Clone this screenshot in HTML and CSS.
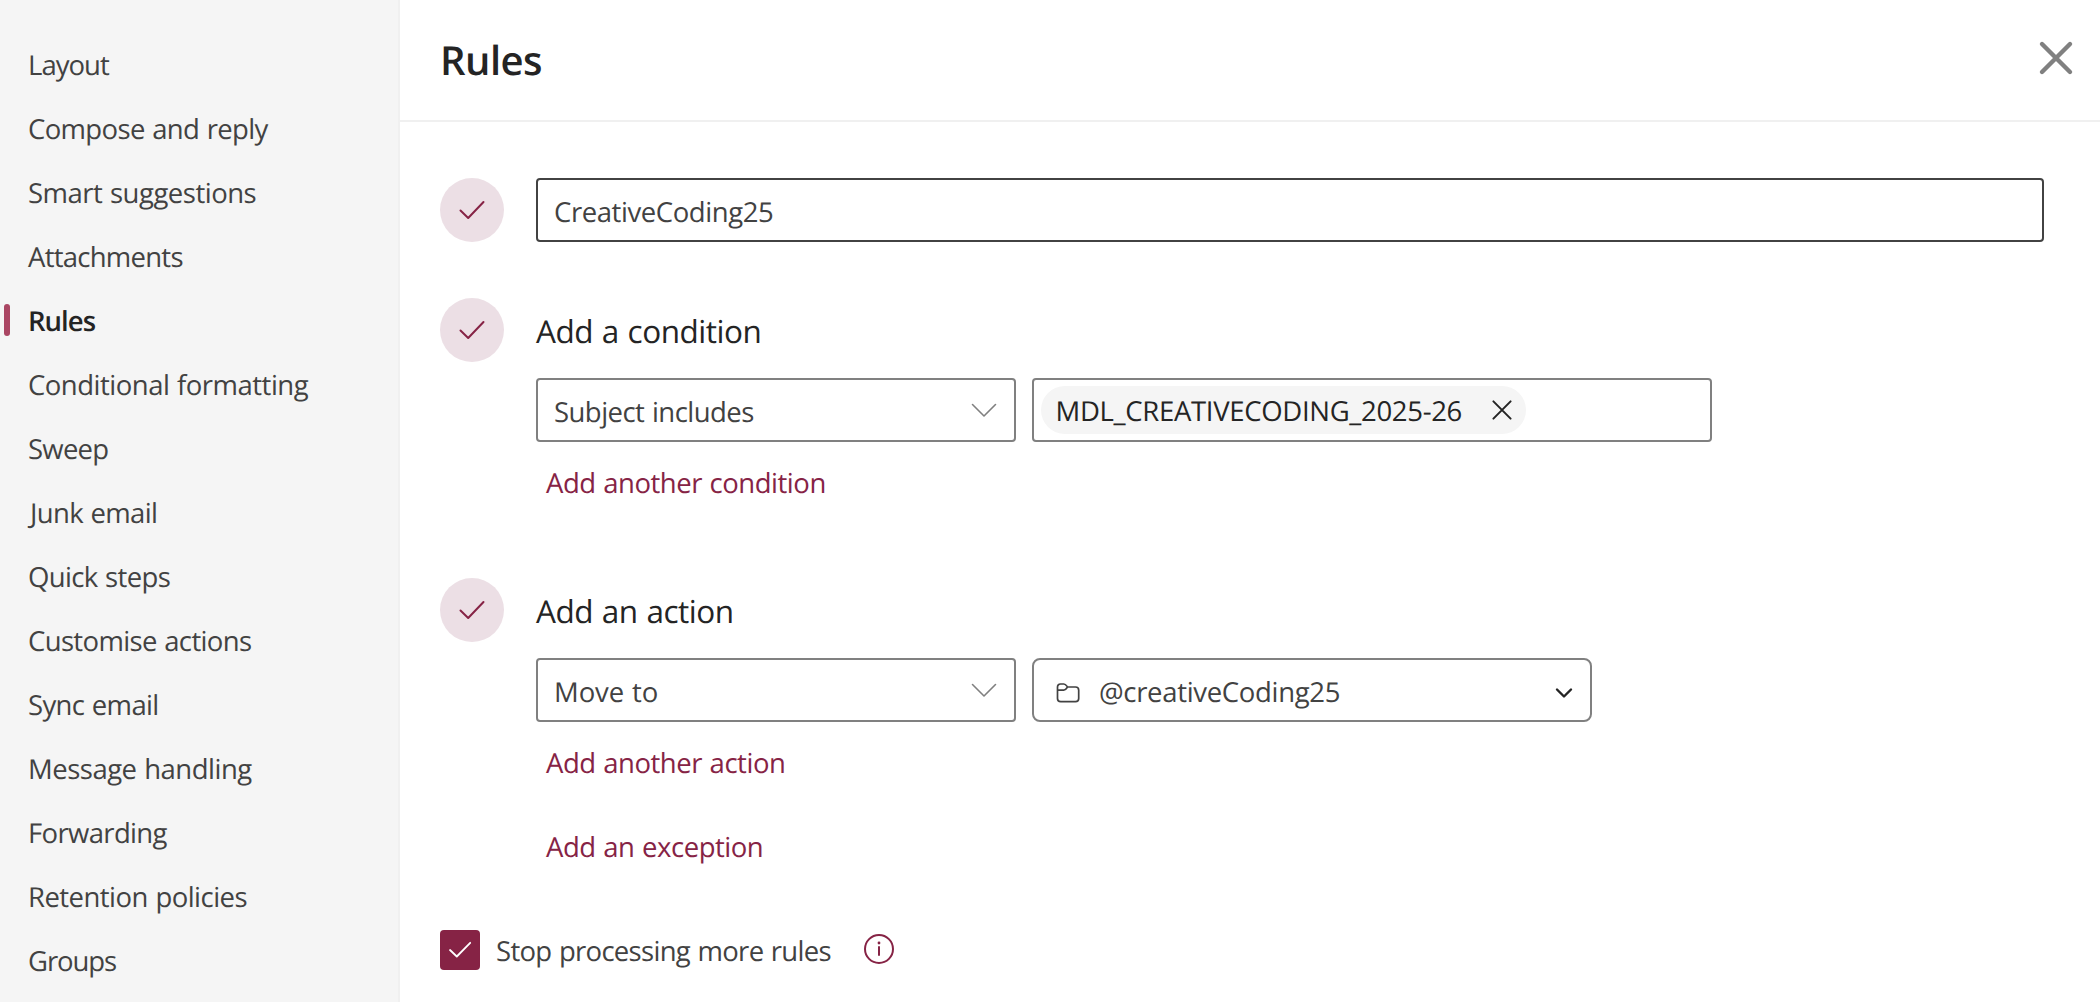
FILE: index.html
```
<!DOCTYPE html>
<html lang="en">
<head>
<meta charset="utf-8">
<title>Rules</title>
<link rel="stylesheet" href="styles.css">
</head>
<body>
<div class="settings">
  <nav class="sidebar">
    <a class="nav-item t96">Layout</a>
    <a class="nav-item t60">Compose and reply</a>
    <a class="nav-item t45">Smart suggestions</a>
    <a class="nav-item t75">Attachments</a>
    <a class="nav-item t96 active">Rules</a>
    <a class="nav-item t45">Conditional formatting</a>
    <a class="nav-item t75">Sweep</a>
    <a class="nav-item t60 nudge">Junk email</a>
    <a class="nav-item t60">Quick steps</a>
    <a class="nav-item t60">Customise actions</a>
    <a class="nav-item t60">Sync email</a>
    <a class="nav-item t45">Message handling</a>
    <a class="nav-item t60">Forwarding</a>
    <a class="nav-item t50">Retention policies</a>
    <a class="nav-item t110">Groups</a>
  </nav>
  <main class="panel">
    <header class="panel-header">
      <h1 class="title">Rules</h1>
      <svg class="close" width="36" height="36" viewBox="0 0 36 36"><path d="M4 4 32 32M32 4 4 32"/></svg>
    </header>
    <div class="form">
      <section class="step">
        <span class="badge"><svg width="28" height="22" viewBox="0 0 28 22"><path d="M2.5 11.5 10.2 19 25.5 3"/></svg></span>
        <div class="field name-field t40"><span>CreativeCoding25</span></div>
      </section>

      <section class="step condition">
        <span class="badge"><svg width="28" height="22" viewBox="0 0 28 22"><path d="M2.5 11.5 10.2 19 25.5 3"/></svg></span>
        <div class="step-body">
          <h2 class="heading">Add a condition</h2>
          <div class="fields">
            <div class="field select t50"><span>Subject includes</span><svg class="chevron" width="26" height="16" viewBox="0 0 26 16"><path d="M1.5 2.5 13 14 24.5 2.5"/></svg></div>
            <div class="field chip-field">
              <div class="chip t32"><span>MDL_CREATIVECODING_2025-26</span><svg class="remove" width="22" height="22" viewBox="0 0 22 22"><path d="M2.4 2.4 19.6 19.6M19.6 2.4 2.4 19.6"/></svg></div>
            </div>
          </div>
          <a class="link">Add another condition</a>
        </div>
      </section>

      <section class="step action">
        <span class="badge"><svg width="28" height="22" viewBox="0 0 28 22"><path d="M2.5 11.5 10.2 19 25.5 3"/></svg></span>
        <div class="step-body">
          <h2 class="heading">Add an action</h2>
          <div class="fields">
            <div class="field select t10"><span>Move to</span><svg class="chevron" width="26" height="16" viewBox="0 0 26 16"><path d="M1.5 2.5 13 14 24.5 2.5"/></svg></div>
            <div class="field folder-field t32">
              <svg class="folder" width="26" height="22" viewBox="0 0 26 22"><path d="M12.500 5H20.500A3.200 3.200 0 0 1 23.700 8.200V16.500A3.200 3.200 0 0 1 20.500 19.700H5.700A3.200 3.200 0 0 1 2.500 16.500V5A3 3 0 0 1 5.500 2H8.800C10.800 2 11.300 3.400 12.500 5C11.300 6.800 10.800 8.200 8.800 8.200H2.500"/></svg>
              <span>@creativeCoding25</span>
              <svg class="caret" width="20" height="12" viewBox="0 0 20 12"><path d="M3 2.5 10 9.5 17 2.5"/></svg>
            </div>
          </div>
          <a class="link">Add another action</a>
          <a class="link exception">Add an exception</a>
        </div>
      </section>

      <div class="stop-row">
        <span class="checkbox"><svg width="24" height="20" viewBox="0 0 24 20"><path d="M2 10 8.800 16.500 22.200 2.800"/></svg></span>
        <span class="stop-label t65">Stop processing more rules</span>
        <svg class="info" width="32" height="32" viewBox="0 0 32 32"><circle cx="16" cy="16" r="14"/><path d="M16 14V22"/><circle class="dot" cx="16" cy="10" r="1.400"/></svg>
      </div>
    </div>
  </main>
</div>
</body>
</html>
```

FILE: styles.css
```
* { box-sizing: border-box; }

body {
  margin: 0;
  background: #fff;
  color: #424242;
  font: 27.5px/40px "Open Sans", "Noto Sans", sans-serif;
  text-rendering: geometricPrecision;
  word-spacing: 1px;
}

svg { display: block; flex: none; fill: none; stroke-linecap: round; stroke-linejoin: round; }

.settings { display: flex; height: 1002px; overflow: hidden; }

/* Sidebar */
.sidebar {
  width: 400px;
  flex: none;
  padding-top: 32px;
  background: #f5f5f5;
  border-right: 2px solid #f0f0f0;
}
.nav-item { display: flex; align-items: center; height: 64px; padding: 4px 0 0 28px; }
.nav-item.nudge { padding-left: 30px; }
.nav-item.active { padding-left: 4px; color: #242424; font-weight: 600; }
.nav-item.active::before {
  content: "";
  width: 6px;
  height: 32px;
  margin: -4px 18px 0 0;
  border-radius: 3px;
  background: #aa4663;
}

/* Tracking */
.t10 { letter-spacing: -0.1px; }
.t32 { letter-spacing: -0.32px; }
.t40 { letter-spacing: -0.42px; }
.t45 { letter-spacing: -0.5px; }
.t50 { letter-spacing: -0.54px; }
.t60 { letter-spacing: -0.65px; }
.t65 { letter-spacing: -0.7px; }
.t75 { letter-spacing: -0.75px; }
.t96 { letter-spacing: -0.96px; }
.t110 { letter-spacing: -1.1px; }

/* Panel */
.panel { flex: 1; }
.panel-header {
  display: flex;
  align-items: center;
  justify-content: space-between;
  height: 122px;
  padding: 0 26px 0 40px;
  border-bottom: 2px solid #f0f0f0;
}
.title { margin: 0; color: #242424; font-size: 40px; font-weight: 600; letter-spacing: -0.54px; }
.close { margin-bottom: 4px; stroke: #808080; stroke-width: 4.4; }

.form { padding: 56px 56px 0 40px; }
.step { display: grid; grid-template-columns: 64px 1fr; column-gap: 32px; }
.condition { margin-top: 56px; }
.action { margin-top: 74px; }

.badge {
  display: flex;
  align-items: center;
  justify-content: center;
  width: 64px;
  height: 64px;
  border-radius: 50%;
  background: #ecdfe5;
}
.badge svg { stroke: #862345; stroke-width: 2; }

.heading {
  margin: 0 0 16px;
  padding-top: 3px;
  height: 64px;
  line-height: 62px;
  color: #242424;
  font-size: 31.5px;
  font-weight: 400;
  letter-spacing: -0.46px;
}

.fields { display: flex; gap: 16px; }
.field {
  display: flex;
  align-items: center;
  height: 64px;
  border: 2px solid #808080;
  border-radius: 4px;
  padding: 0 16px;
}
.field > span { padding-top: 6px; }
.name-field { border-color: #424242; }
.select { width: 480px; justify-content: space-between; padding-right: 17px; }
.chevron { stroke: #808080; stroke-width: 1.6; }

.chip-field { width: 680px; padding: 0 6.5px; }
.chip {
  display: flex;
  align-items: center;
  gap: 28.5px;
  height: 48px;
  padding: 0 13px 0 15px;
  border-radius: 24px;
  background: #f5f5f5;
  color: #242424;
}
.chip span { padding-top: 3px; }
.remove { stroke: #242424; stroke-width: 2; }

.folder-field { width: 560px; border-radius: 8px; padding: 0 16px 0 21px; }
.folder { margin: 6px 18px 0 0; stroke: #424242; stroke-width: 1.7; }
.caret { margin-left: auto; margin-top: 6px; stroke: #242424; stroke-width: 2.4; }

.link { display: block; width: max-content; margin: 22px 0 0 10px; color: #862345; letter-spacing: -0.48px; }
.exception { margin-top: 44px; }

.stop-row { display: flex; align-items: center; height: 40px; margin-top: 62px; }
.checkbox {
  display: flex;
  align-items: center;
  justify-content: center;
  width: 40px;
  height: 40px;
  margin-right: 16px;
  border-radius: 4px;
  background: #862345;
}
.checkbox svg { stroke: #fff; stroke-width: 1.8; }
.stop-label { padding-top: 4px; }
.info { margin: 0 0 2px 32px; stroke: #862345; stroke-width: 2; }
.info .dot { fill: #862345; stroke: none; }
```
